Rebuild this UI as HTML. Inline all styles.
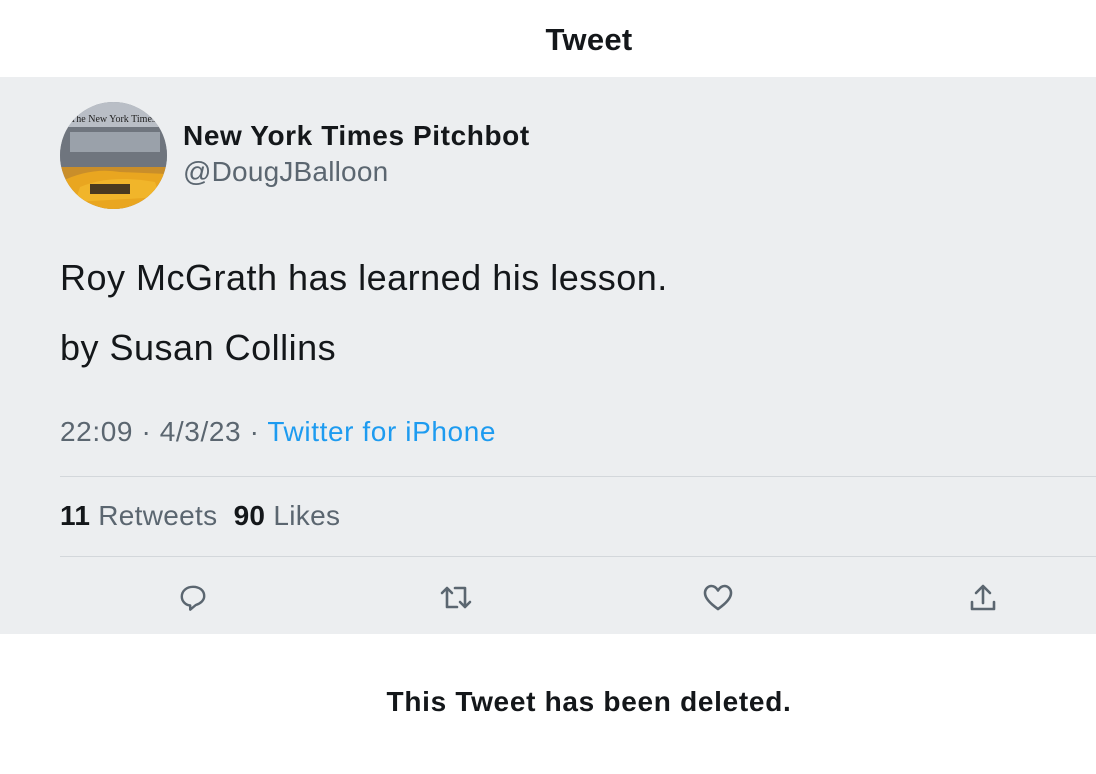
<!DOCTYPE html>
<html><head><style>
body{margin:0;width:1096px;height:774px;background:#fff;font-family:"Liberation Sans",sans-serif;position:relative;overflow:hidden;color:#14171a}
.a{position:absolute;white-space:nowrap}
.g{position:absolute;left:0;top:77px;width:1096px;height:557px;background:#eceef0}
.line{position:absolute;left:60px;right:0;height:1px;background:#d3d7db}
</style></head><body>
<div class="a" style="left:0;width:1178px;text-align:center;top:22px;font-size:31px;font-weight:bold;letter-spacing:0.3px">Tweet</div>
<div class="g"></div>
<svg class="a" style="left:60px;top:102px" width="107" height="107" viewBox="0 0 107 107">
<defs><clipPath id="c"><circle cx="53.5" cy="53.5" r="53.5"/></clipPath></defs>
<g clip-path="url(#c)">
<rect width="107" height="107" fill="#8a8f98"/>
<rect y="0" width="107" height="25" fill="#b9bec6"/>
<rect y="25" width="107" height="40" fill="#6f757e"/>
<rect x="10" y="30" width="90" height="20" fill="#9aa1aa"/>
<rect y="65" width="107" height="42" fill="#c98e2a"/>
<path d="M0 80 Q30 65 60 70 L107 72 L107 107 L0 107Z" fill="#e9a620"/>
<path d="M20 85 Q50 72 95 80 L100 95 L15 100Z" fill="#f1b52a"/>
<rect x="30" y="82" width="40" height="10" fill="#4a3a20"/>
<text x="53" y="20" font-size="10" text-anchor="middle" fill="#222" font-family="Liberation Serif">The New York Times</text>
</g></svg>
<div class="a" style="left:183px;top:120px;font-size:28px;font-weight:bold;letter-spacing:0.6px">New York Times Pitchbot</div>
<div class="a" style="left:183px;top:156px;font-size:28px;color:#5b6670;letter-spacing:0.2px">@DougJBalloon</div>
<div class="a" style="left:60px;top:257px;font-size:36px;letter-spacing:0.5px">Roy McGrath has learned his lesson.</div>
<div class="a" style="left:60px;top:327px;font-size:36px;letter-spacing:0.5px">by Susan Collins</div>
<div class="a" style="left:60px;top:416px;font-size:28px;color:#5b6670;letter-spacing:0.6px">22:09 · 4/3/23 · <span style="color:#1d9bf0">Twitter for iPhone</span></div>
<div class="line" style="top:476px"></div>
<div class="a" style="left:60px;top:500px;font-size:28px;color:#5b6670;letter-spacing:0.3px"><b style="color:#14171a">11</b> Retweets &nbsp;<b style="color:#14171a">90</b> Likes</div>
<div class="line" style="top:556px"></div>
<svg class="a" style="left:179px;top:584px" width="28" height="28" viewBox="0 0 30 30" fill="none" stroke="#5b6670" stroke-width="2.6" stroke-linejoin="round"><path d="M15 3C8 3 3 7.5 3 13.5c0 5 4 9 9 9.5v4.5l6-5c5-1.5 9-5 9-9.5C27 7 22 3 15 3z"/></svg>
<svg class="a" style="left:440px;top:583px" width="32" height="30" viewBox="0 0 32 30" fill="none" stroke="#5b6670" stroke-width="2.6" stroke-linecap="round" stroke-linejoin="round"><path d="M7 24V5M2 10l5-5 5 5M7 24h10M25 5v19M20 19l5 5 5-5M25 5H15"/></svg>
<svg class="a" style="left:703px;top:584px" width="30" height="28" viewBox="0 0 30 28" fill="none" stroke="#5b6670" stroke-width="2.6" stroke-linejoin="round"><path d="M15 25C5 18 2 13 2 9c0-4 3-7 6.5-7 3 0 5 2 6.5 4.5C16.5 4 18.5 2 21.5 2 25 2 28 5 28 9c0 4-3 9-13 16z"/></svg>
<svg class="a" style="left:968px;top:583px" width="30" height="30" viewBox="0 0 30 30" fill="none" stroke="#5b6670" stroke-width="2.6" stroke-linecap="round" stroke-linejoin="round"><path d="M15 20V3M8 10l7-7 7 7M4 19v7h22v-7"/></svg>
<div class="a" style="left:0;width:1178px;text-align:center;top:686px;font-size:28px;font-weight:bold;letter-spacing:0.7px">This Tweet has been deleted.</div>
</body></html>
